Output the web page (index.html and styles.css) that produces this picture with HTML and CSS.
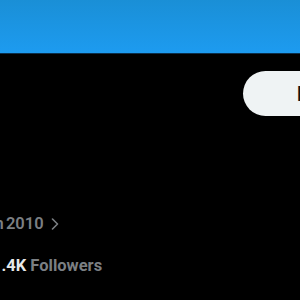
FILE: index.html
```html
<!DOCTYPE html>
<html lang="en">
<head>
  <meta charset="UTF-8" />
  <meta name="viewport" content="width=device-width, initial-scale=1.0"/>
  <title>Profile</title>
  <link rel="stylesheet" href="styles.css">
</head>
<body>
  <div class="banner"></div>
  <div class="profile">
    <div class="actions">
      <button class="edit-btn">Edit profile</button>
    </div>
    <div class="joined">
      <span>Joined in 2010</span>
      <svg class="chev" width="8" height="12" viewBox="0 0 8 12">
        <path d="M1.5 1 L6.5 6 L1.5 11" fill="none" stroke="#7b7f83" stroke-width="1.6" stroke-linecap="round" stroke-linejoin="round"/>
      </svg>
    </div>
    <div class="stats">
      <span class="num">1.4K</span> <span class="label">Followers</span>
    </div>
  </div>
</body>
</html>
```

FILE: styles.css
```css
body {
  margin: 0;
  background: #000;
  font-family: Roboto, "Liberation Sans", sans-serif;
  width: 300px;
  height: 300px;
  overflow: hidden;
}
.banner {
  height: 53px;
  background: linear-gradient(#1a8fd6, #1d9bf0);
  border-bottom: 1px solid #0c2f4a;
}
.profile {
  padding-top: 17px;
}
.actions {
  display: flex;
  justify-content: flex-end;
}
.edit-btn {
  width: 140px;
  height: 45px;
  margin-right: -83px;
  padding: 0 0 0 54px;
  border: none;
  border-radius: 23px;
  background: #eff3f4;
  color: #0f1419;
  font-family: inherit;
  font-size: 20px;
  font-weight: 700;
  text-align: left;
  white-space: nowrap;
}
.joined {
  display: flex;
  align-items: center;
  gap: 7px;
  margin-top: 98px;
  margin-left: -62px;
  color: #7b7f83;
  font-size: 16.5px;
  font-weight: 600;
  word-spacing: -2px;
}
.stats {
  margin-top: 23px;
  margin-left: -8px;
  font-size: 16.5px;
  font-weight: 700;
}
.num {
  color: #e7e9ea;
}
.label {
  color: #7b7f83;
}
```
